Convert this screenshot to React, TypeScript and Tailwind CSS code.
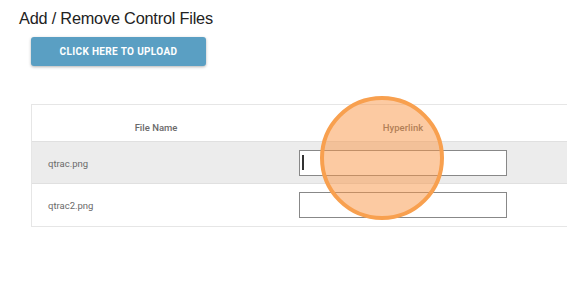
import React from 'react'

const files = ['qtrac.png', 'qtrac2.png']

export default function App() {
  return (
    <div className="relative w-[567px] h-[288px] overflow-hidden bg-white font-['Liberation_Sans',Arial,sans-serif]">
      <h1 className="pl-[19px] pt-[9px] text-[16.3px] leading-[18px] text-[#222] tracking-[-0.2px]">
        Add / Remove Control Files
      </h1>

      <div className="pl-[31px] pt-[10px]">
        <button className="w-[175px] h-[29px] rounded-[3px] bg-[#5a9fc3] shadow-[0_1px_3px_rgba(0,0,0,0.3)] text-white text-[10px] font-bold tracking-[0.35px] font-['Roboto',sans-serif]">
          CLICK HERE TO UPLOAD
        </button>
      </div>

      {/* table */}
      <div className="ml-[31px] mt-[38px] w-[600px] border-l border-t border-b border-[#e6e6e6] text-[9.5px] text-[#6a6a6a] font-['Roboto',sans-serif]">
        <div className="grid grid-cols-[248px_246px_1fr] h-[37px] items-end pb-[6px] border-b border-[#e0e0e0] font-medium">
          <div className="text-center">File Name</div>
          <div className="text-center">Hyperlink</div>
          <div />
        </div>
        {files.map((f, i) => (
          <div
            key={f}
            className={`grid grid-cols-[248px_246px_1fr] h-[42px] items-center ${i === 0 ? 'bg-[#ececec] border-b border-[#e0e0e0]' : 'bg-white'}`}
          >
            <div className="pl-[16px] pt-[3px]">{f}</div>
            <div className="pl-[19px]">
              <div className="relative w-[208px] h-[26px] bg-white border border-[#888]">
                {i === 0 && <span className="absolute left-[2px] top-[4px] w-[1.5px] h-[15px] bg-[#333]" />}
              </div>
            </div>
            <div />
          </div>
        ))}
      </div>

      {/* click highlight */}
      <div className="absolute left-[320px] top-[96px] w-[124px] h-[124px] rounded-full border-[4px] border-[#f8a04f] bg-[rgba(250,150,70,0.5)]" />
    </div>
  )
}
